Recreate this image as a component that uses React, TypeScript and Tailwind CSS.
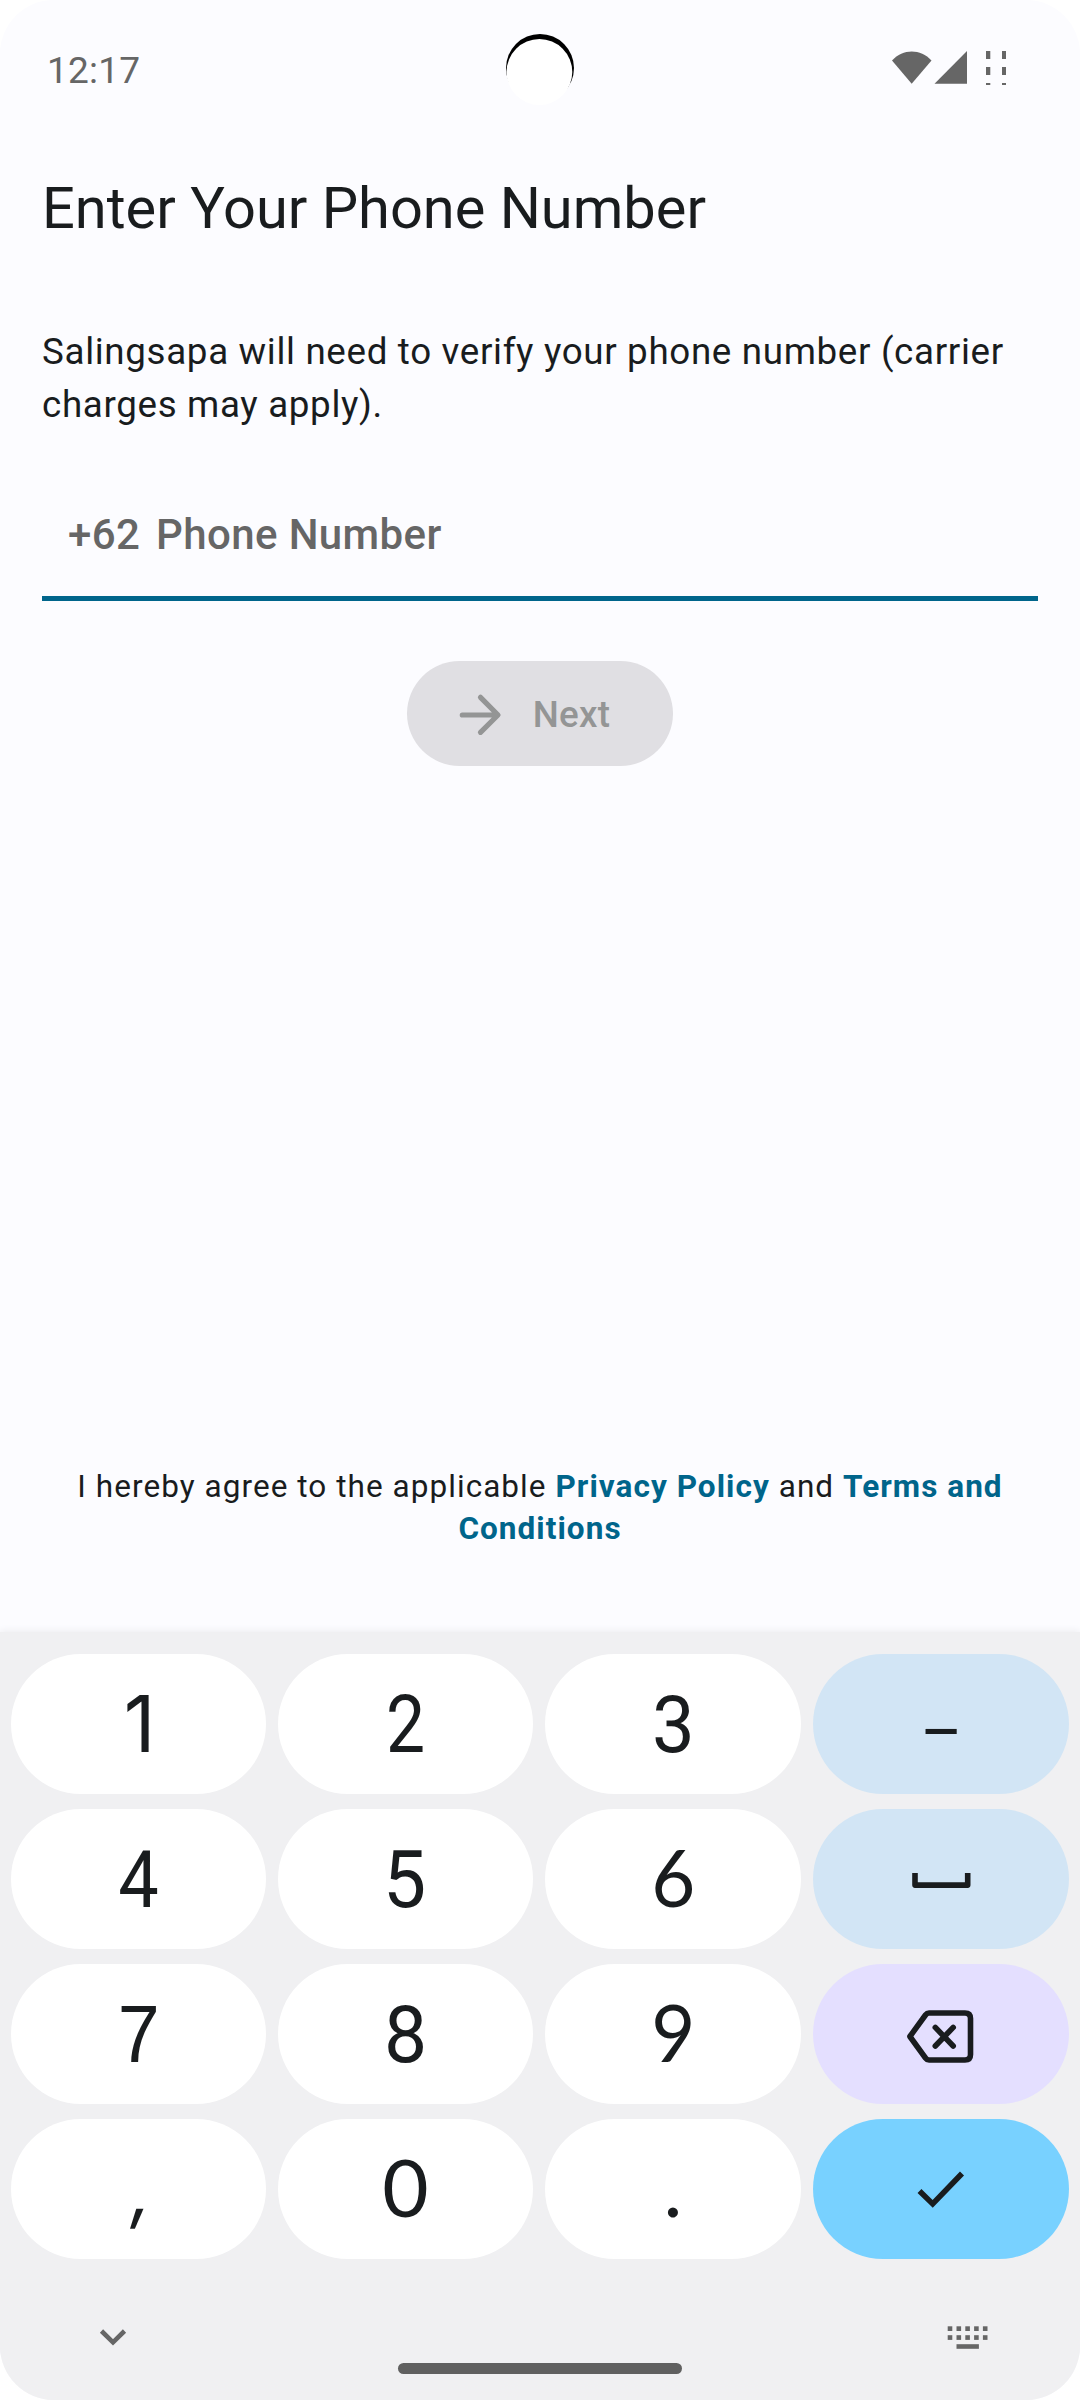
type IconName = "space" | "back" | "check";
type KeyDef = { label: string; tone?: string; face?: string; fit?: string; icon?: IconName };

const LATO = "font-['Lato'] leading-[0]";
const INTER = "font-['Inter'] leading-[0]";
const ARIAL = "font-['Liberation_Sans'] leading-[0]";

const keys: KeyDef[] = [
  { label: "1", face: INTER + " text-[78px]", fit: "translate-x-[1px]" },
  { label: "2", fit: "scale-x-[0.87]" },
  { label: "3", fit: "scale-x-[0.95]" },
  { label: "–", tone: "bg-[#d2e5f5]", face: LATO + " text-[78px]", fit: "translate-y-[2px]" },
  { label: "4", fit: "scale-x-[0.9]" },
  { label: "5", fit: "scale-x-[0.96] -translate-x-[1px]" },
  { label: "6", face: LATO, fit: "scale-x-[0.95]" },
  { label: "Space", tone: "bg-[#d2e5f5]", icon: "space" },
  { label: "7", face: ARIAL + " text-[82px]", fit: "scale-x-[0.92]" },
  { label: "8", fit: "scale-x-[0.96]" },
  { label: "9", face: LATO, fit: "scale-x-[0.95]" },
  { label: "Backspace", tone: "bg-[#e4dfff]", icon: "back" },
  { label: ",", face: INTER + " text-[72px]", fit: "-skew-x-[9deg] translate-x-[4px] -translate-y-[1px]" },
  { label: "0", face: LATO },
  { label: ".", face: LATO },
  { label: "Done", tone: "bg-[#78d1ff]", icon: "check" },
];

function KeyIcon({ name }: { name: IconName }) {
  return (
    <svg viewBox="0 0 80 80" className="size-20" fill="none" stroke="#191c1e" strokeWidth="5.6">
      {name === "space" && <path d="M14 33.9V46.1H66.7V33.9" strokeLinejoin="round" />}
      {name === "back" && (
        <>
          <path d="M28 19H64Q69.5 19 69.5 24.5V60.5Q69.5 66 64 66H28Q26 66 24.5 64L8.9 42.5L24.5 21Q26 19 28 19Z" strokeLinejoin="round" />
          <path d="M34.3 33.4L52.2 52M52.2 33.4L34.3 52" strokeLinecap="round" />
        </>
      )}
      {name === "check" && <path d="M18.5 42L31.7 54.9L61 24.5" />}
    </svg>
  );
}

export default function App() {
  return (
    <div className="h-[2400px] w-[1080px] bg-white font-['Roboto',sans-serif] text-[#191c1e]">
      <div className="flex h-full flex-col overflow-hidden rounded-[54px] bg-[#fcfcff]">
        <header className="relative flex h-[136px] shrink-0 items-center justify-between pl-[47px] pr-[74px] text-[#666]">
          <span className="mt-[5px] text-[37px] leading-[44px] tracking-[0.2px]">12:17</span>
          <svg className="absolute left-[500px] top-[28px] h-[80px] w-[80px]" viewBox="0 0 80 80">
            <circle cx="40" cy="40" r="34" fill="#000" />
            <circle cx="39.4" cy="44" r="32.9" fill="#fff" />
          </svg>
          <svg className="h-[36px] w-[114px]" viewBox="892 50 114 36" fill="#666">
            <path d="M892 60.5C903 48.5 920.5 48.5 931.5 60.5L911.7 83.7Z" />
            <path d="M934.5 83.7H967V51Z" />
            <path d="M986 51h4.3v8h-4.3zM1002 51h4.3v8h-4.3zM986 67h4.3v8h-4.3zM1002 67h4.3v8h-4.3zM986 83h4.3v2h-4.3zM1002 83h4.3v2h-4.3z" />
          </svg>
        </header>

        <main className="flex flex-1 flex-col px-[42px] pt-9">
          <h1 className="text-[57.75px] leading-[72px]">Enter Your Phone Number</h1>
          <p className="mt-[81px] text-[36.75px] leading-[53px] tracking-[0.66px]">
            Salingsapa will need to verify your phone number (carrier charges may apply).
          </p>
          <div className="mt-[76px] flex h-[94px] border-b-[5px] border-[#00658b] pl-[26px] text-[42px] font-medium leading-[56px] tracking-[0.39px] text-[#666]">
            <span className="w-[88px]">+62</span>
            <span>Phone Number</span>
          </div>
          <button className="mt-[60px] flex h-[105px] w-[266.5px] items-center self-center rounded-full bg-[#e0dfe3] pl-[48px] text-[36.75px] font-medium tracking-[0.26px] text-[#949595]">
            <svg className="size-[50px]" viewBox="0 0 50 50" fill="none" stroke="#949595" strokeWidth="5.2" strokeLinecap="round" strokeLinejoin="round">
              <path d="M7.3 26H42.3M25.5 8.3L43 26L25.5 43.3" />
            </svg>
            <span className="ml-[28px] pt-[2px]">Next</span>
          </button>
          <p className="mb-[82px] mt-auto text-center text-[31.5px] leading-[42px] tracking-[1.05px]">
            I hereby agree to the applicable <b className="text-[#00658b]">Privacy Policy</b> and{" "}
            <b className="text-[#00658b]">Terms and Conditions</b>
          </p>
        </main>

        <section className="flex h-[768px] shrink-0 flex-col bg-[#f0f0f2] shadow-[0_0_8px_#e8e8eb]">
          <div className="grid grid-cols-[255px_255px_256px_256px] gap-x-3 gap-y-[15px] px-[11px] pt-[22px]">
            {keys.map((k) => (
              <button key={k.label} aria-label={k.label} className={`flex h-[140px] items-center justify-center rounded-full text-[80px] leading-none ${k.tone ?? "bg-white"}`}>
                {k.icon ? (
                  <KeyIcon name={k.icon} />
                ) : (
                  <span className={`pt-[2px] ${k.fit ?? ""}`}>
                    <span className={k.face ?? ""}>{k.label}</span>
                  </span>
                )}
              </button>
            ))}
          </div>
          <footer className="relative flex flex-1 items-start justify-between px-[92px] pt-[57px]">
            <svg className="h-[40px] w-[40px]" viewBox="0 0 40 40" fill="none" stroke="#666" strokeWidth="4.6">
              <path d="M9.5 15L21 26.3L32.5 15" />
            </svg>
            <svg className="h-[40px] w-[44px]" viewBox="944 2316 44 40" fill="#666">
              {[0, 1, 2, 3, 4].map((i) => (
                <g key={i}>
                  <rect x={947.7 + i * 8.8} y="2326.3" width="4.6" height="4.7" />
                  <rect x={947.7 + i * 8.8} y="2335.2" width="4.6" height="4.7" />
                </g>
              ))}
              <rect x="956.5" y="2344.2" width="22.4" height="4.6" />
            </svg>
            <div className="absolute bottom-[26px] left-[398px] h-[11px] w-[284px] rounded-full bg-[#606060]" />
          </footer>
        </section>
      </div>
    </div>
  );
}
